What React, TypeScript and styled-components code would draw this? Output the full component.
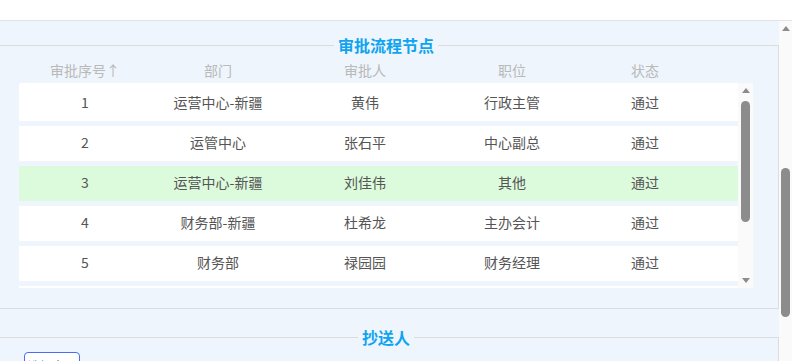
import React from 'react';
import styled, { createGlobalStyle } from 'styled-components';

interface Node {
  seq: number;
  dept: string;
  approver: string;
  position: string;
  status: string;
  current?: boolean;
}

const nodes: Node[] = [
  { seq: 1, dept: '运营中心-新疆', approver: '黄伟', position: '行政主管', status: '通过' },
  { seq: 2, dept: '运管中心', approver: '张石平', position: '中心副总', status: '通过' },
  { seq: 3, dept: '运营中心-新疆', approver: '刘佳伟', position: '其他', status: '通过', current: true },
  { seq: 4, dept: '财务部-新疆', approver: '杜希龙', position: '主办会计', status: '通过' },
  { seq: 5, dept: '财务部', approver: '禄园园', position: '财务经理', status: '通过' },
];

const columns = ['审批序号↑', '部门', '审批人', '职位', '状态'];

const GlobalStyle = createGlobalStyle`
  html, body {
    margin: 0;
    padding: 0;
    overflow: hidden;
    background: #fff;
  }
  body {
    font-family: "Noto Sans CJK SC", "Noto Sans", "Liberation Sans", sans-serif;
  }
`;

const Page = styled.div`
  width: 792px;
  height: 361px;
  display: flex;
  flex-direction: column;
  overflow: hidden;
`;

const TopBar = styled.div`
  flex: none;
  height: 20px;
  background: #fff;
  border-bottom: 1px solid #e1e3e6;
`;

const Viewport = styled.div`
  flex: 1;
  min-height: 0;
  display: flex;
  background: #eef5fc;
`;

const Content = styled.div`
  flex: 1;
  min-width: 0;
  padding-top: 13px;
  overflow: hidden;
`;

const Fieldset = styled.fieldset<{ $gap?: number }>`
  margin: ${({ $gap }) => $gap ?? 0}px 0 0;
  min-width: 0;
  box-sizing: border-box;
  width: 100%;
  padding: 0 25px 20px 19px;
  border: 1px solid #dcdcdc;
  border-left: none;
`;

const Legend = styled.legend`
  margin: 0 auto;
  padding: 0 4px;
  font-size: 16px;
  line-height: 22px;
  font-weight: 700;
  color: #0fa4ef;
`;

const GRID = '132px 134px 160px 134px 132px';

const HeaderRow = styled.div`
  display: grid;
  grid-template-columns: ${GRID};
  margin-top: 4px;
  line-height: 20px;
  font-size: 14px;
  color: #b9b9b9;
  text-align: center;
`;

const Body = styled.div`
  display: flex;
  height: 205px;
  margin-top: 3px;
  background: #fff;
  overflow: hidden;
`;

const Rows = styled.div`
  flex: 1;
  min-width: 0;
  padding-top: 3px;
`;

const Row = styled.div<{ $current?: boolean }>`
  display: grid;
  grid-template-columns: ${GRID};
  align-items: center;
  box-sizing: border-box;
  height: 40px;
  padding-bottom: 3px;
  border-bottom: 5px solid #eef5fc;
  background: ${({ $current }) => ($current ? '#dcfbdc' : '#fff')};
  font-size: 14px;
  color: #555;
  text-align: center;
`;

const Track = styled.div<{ $width: number }>`
  flex: none;
  width: ${({ $width }) => $width}px;
  display: flex;
  flex-direction: column;
  align-items: center;
  background: #fafafa;
`;

const Arrow = styled.div<{ $down?: boolean; $offset: number }>`
  flex: none;
  width: 0;
  height: 0;
  border-left: 4.5px solid transparent;
  border-right: 4.5px solid transparent;
  ${({ $down }) =>
    $down ? 'border-top: 5px solid #8c8c8c;' : 'border-bottom: 5px solid #8c8c8c;'}
  margin-top: ${({ $offset }) => $offset}px;
`;

const Thumb = styled.div<{ $offset: number; $height: number }>`
  flex: none;
  width: 9px;
  height: ${({ $height }) => $height}px;
  margin-top: ${({ $offset }) => $offset}px;
  border-radius: 5px;
  background: #8c8c8c;
`;

const CopyButton = styled.button`
  margin: 4px 0 0 5px;
  width: 56px;
  height: 26px;
  padding: 0;
  border: 1px solid #4a6cf7;
  border-radius: 4px;
  background: #fff;
  color: #4a6cf7;
  font-family: inherit;
  font-size: 12px;
`;

const App: React.FC = (): JSX.Element => {
  return (
    <Page>
      <GlobalStyle />
      <TopBar />
      <Viewport>
        <Content>
          <Fieldset>
            <Legend>审批流程节点</Legend>
            <HeaderRow>
              {columns.map((c) => (
                <span key={c}>{c}</span>
              ))}
            </HeaderRow>
            <Body>
              <Rows>
                {nodes.map((n) => (
                  <Row key={n.seq} $current={n.current}>
                    <span>{n.seq}</span>
                    <span>{n.dept}</span>
                    <span>{n.approver}</span>
                    <span>{n.position}</span>
                    <span>{n.status}</span>
                  </Row>
                ))}
              </Rows>
              <Track $width={15}>
                <Arrow $offset={5} />
                <Thumb $offset={8} $height={121} />
                <Arrow $down $offset={56} />
              </Track>
            </Body>
          </Fieldset>
          <Fieldset $gap={17}>
            <Legend>抄送人</Legend>
            <CopyButton>选择人员</CopyButton>
          </Fieldset>
        </Content>
        <Track $width={13}>
          <Arrow $offset={5} />
          <Thumb $offset={137} $height={149} />
        </Track>
      </Viewport>
    </Page>
  );
};

export default App;
